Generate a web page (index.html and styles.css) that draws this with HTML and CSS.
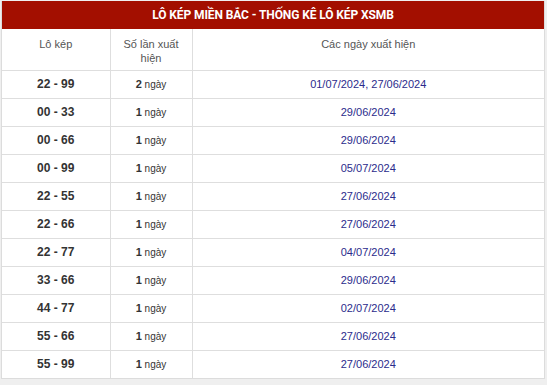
FILE: index.html
```html
<!DOCTYPE html>
<html>
<head>
<meta charset="utf-8">
<link rel="stylesheet" href="styles.css">
</head>
<body>
<div class="box">
  <div class="title"><span>LÔ KÉP MIỀN BẮC - THỐNG KÊ LÔ KÉP XSMB</span></div>
  <table class="stats">
    <thead>
      <tr><th class="c1">Lô kép</th><th class="c2">Số lần xuất hiện</th><th class="c3">Các ngày xuất hiện</th></tr>
    </thead>
    <tbody>
      <tr><td class="pair">22 - 99</td><td class="cnt"><b>2</b> ngày</td><td class="dates">01/07/2024, 27/06/2024</td></tr>
      <tr><td class="pair">00 - 33</td><td class="cnt"><b>1</b> ngày</td><td class="dates">29/06/2024</td></tr>
      <tr><td class="pair">00 - 66</td><td class="cnt"><b>1</b> ngày</td><td class="dates">29/06/2024</td></tr>
      <tr><td class="pair">00 - 99</td><td class="cnt"><b>1</b> ngày</td><td class="dates">05/07/2024</td></tr>
      <tr><td class="pair">22 - 55</td><td class="cnt"><b>1</b> ngày</td><td class="dates">27/06/2024</td></tr>
      <tr><td class="pair">22 - 66</td><td class="cnt"><b>1</b> ngày</td><td class="dates">27/06/2024</td></tr>
      <tr><td class="pair">22 - 77</td><td class="cnt"><b>1</b> ngày</td><td class="dates">04/07/2024</td></tr>
      <tr><td class="pair">33 - 66</td><td class="cnt"><b>1</b> ngày</td><td class="dates">29/06/2024</td></tr>
      <tr><td class="pair">44 - 77</td><td class="cnt"><b>1</b> ngày</td><td class="dates">02/07/2024</td></tr>
      <tr><td class="pair">55 - 66</td><td class="cnt"><b>1</b> ngày</td><td class="dates">27/06/2024</td></tr>
      <tr><td class="pair">55 - 99</td><td class="cnt"><b>1</b> ngày</td><td class="dates">27/06/2024</td></tr>
    </tbody>
  </table>
</div>
</body>
</html>
```
FILE: styles.css
```css
html, body {
  margin: 0;
  padding: 0;
  background: #efefef;
}
body {
  font-family: "Liberation Sans", Arial, sans-serif;
  padding: 1px 0 0 1px;
}
.box {
  width: 544px;
  background: #fff;
  border: 1px solid #dcdcdc;
  border-top: 0;
  box-sizing: border-box;
}
.title {
  background: #a30f00;
  color: #fff;
  height: 28px;
  display: flex;
  align-items: center;
  justify-content: center;
  font-family: Roboto, "Liberation Sans", sans-serif;
  font-weight: 700;
  font-size: 12px;
  letter-spacing: -0.1px;
}
.stats {
  width: 100%;
  border-collapse: collapse;
  table-layout: fixed;
}
.stats th, .stats td {
  border: 1px solid #dedede;
  text-align: center;
  padding: 0;
  box-sizing: border-box;
}
.stats tr > :first-child { border-left: 0; }
.stats tr > :last-child { border-right: 0; }
.stats tbody tr:last-child td { border-bottom: 0; }
.stats thead th { border-top: 0; }
.c1 { width: 108px; }
.c2 { width: 82px; }
.stats th {
  font-weight: 400;
  font-size: 11px;
  color: #555;
  line-height: 14px;
  height: 41px;
  vertical-align: top;
  padding: 8px 10px 0;
}
.stats td {
  height: 28px;
}
.pair {
  font-weight: 700;
  font-size: 12px;
  color: #333;
}
.cnt {
  font-size: 10px;
  color: #333;
}
.cnt b {
  font-size: 11px;
}
.dates {
  font-size: 11px;
  color: #2b2b8c;
}
```
